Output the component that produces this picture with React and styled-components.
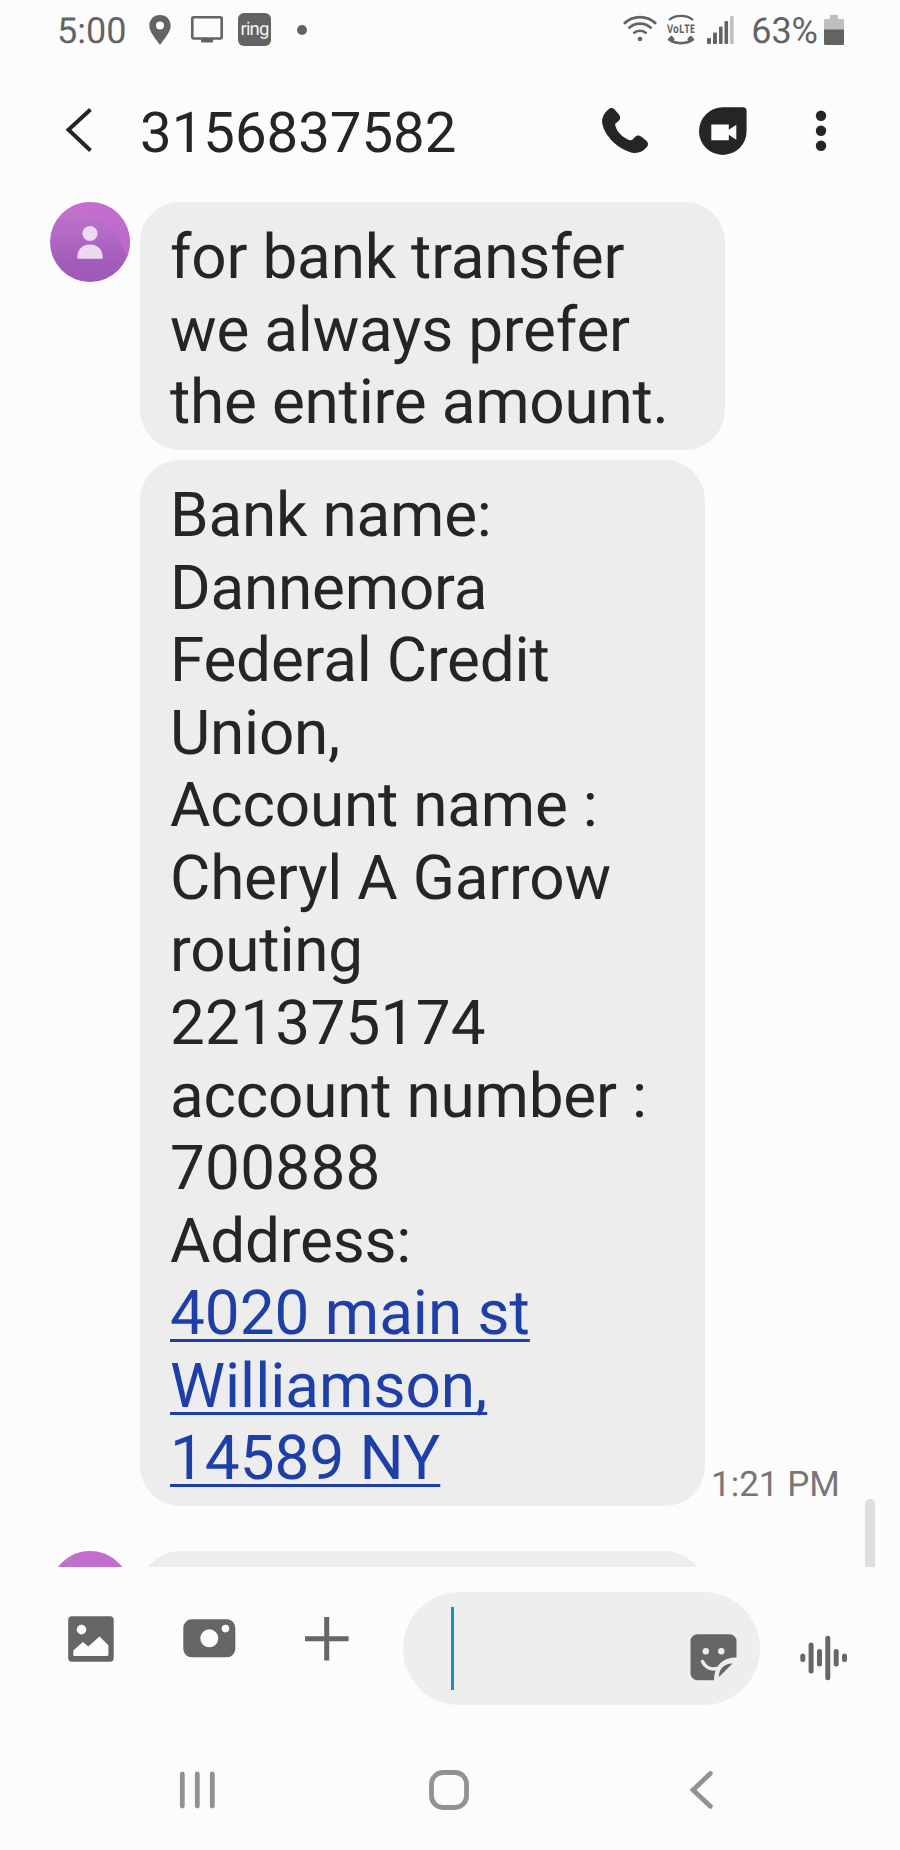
import styled, { createGlobalStyle } from 'styled-components';

const messages = [
  {
    id: 1,
    avatar: true,
    width: 585,
    lines: ['for bank transfer', 'we always prefer', 'the entire amount.'],
  },
  {
    id: 2,
    width: 565,
    lines: [
      'Bank name:',
      'Dannemora',
      'Federal Credit',
      'Union,',
      'Account name :',
      'Cheryl A Garrow',
      'routing',
      '221375174',
      'account number :',
      '700888',
      'Address:',
    ],
    link: ['4020 main st', 'Williamson,', '14589 NY'],
    time: '1:21 PM',
  },
  { id: 3, avatar: true, width: 565, lines: [] },
];

const isNumber = (line) => /^\d+$/.test(line);

const StatusIcons = () => (
  <>
    <Icon width="22" height="30" viewBox="0 0 22 30" $left={21}>
      <path
        fillRule="evenodd"
        d="M11 0C4.8 0 .3 4.8.3 10.6c0 6.400 5 11.400 10.700 19.400 5.700-8 10.700-13 10.700-19.400C21.700 4.800 17.200 0 11 0zm0 6.500a4 4 0 1 1 0 8 4 4 0 0 1 0-8z"
      />
    </Icon>
    <Icon width="32" height="27" viewBox="0 0 32 27" $left={20}>
      <rect
        x="1.300"
        y="1.300"
        width="29.400"
        height="21.200"
        rx="1.500"
        fill="none"
        stroke="currentColor"
        strokeWidth="2.600"
      />
      <rect x="10" y="22" width="12" height="4.500" rx="1" />
    </Icon>
    <RingBadge>ring</RingBadge>
    <Dot />
  </>
);

const SignalIcons = () => (
  <>
    <Icon width="34" height="27" viewBox="0 0 34 27" $top={-3}>
      <g fill="none" stroke="currentColor" strokeWidth="2.700">
        <path d="M1 8.800a22.500 22.500 0 0 1 32 0" />
        <path d="M5.500 13.400a16.200 16.200 0 0 1 23 0" />
        <path d="M10.500 18.400a9.300 9.300 0 0 1 13 0" />
      </g>
      <circle cx="17" cy="24" r="2.300" />
    </Icon>
    <Icon width="30" height="31" viewBox="0 0 30 31" $left={9}>
      <path
        d="M3 6C9 .5 21 .5 27 6"
        fill="none"
        stroke="currentColor"
        strokeWidth="2.200"
      />
      <text
        x="15"
        y="18.500"
        textAnchor="middle"
        textLength="28"
        lengthAdjust="spacingAndGlyphs"
        fontFamily="Open Sans, sans-serif"
        fontWeight="700"
        fontSize="12"
      >
        VoLTE
      </text>
      <path d="M1.500 25.500l3-3.300c.7-.6 1.500-.3 2.100.3l1.500 1.700c.6.7.5 1.400-.2 2.200 4 1.900 10.200 1.900 14.200 0-.7-.8-.8-1.500-.2-2.200l1.500-1.700c.6-.6 1.400-.9 2.100-.3l3 3.300C23 32 7 32 1.500 25.500z" />
    </Icon>
    <Icon width="28" height="28" viewBox="0 0 28 28" $left={11} $top={1}>
      <rect x="0" y="22" width="4" height="6" rx="1" />
      <rect x="6" y="16.500" width="4" height="11.500" rx="1" />
      <rect x="12" y="10.500" width="3.600" height="17.500" rx="1" />
      <rect x="17.500" y="5" width="3.600" height="23" rx="1" />
      <rect x="23" y="0" width="3.600" height="28" rx="1" opacity="0.4" />
    </Icon>
  </>
);

const App = () => {
  return (
    <>
      <GlobalStyle />
      <Screen>
        <StatusBar>
          <Clock>5:00</Clock>
          <StatusIcons />
          <Spacer />
          <SignalIcons />
          <Percent>63%</Percent>
          <Icon width="20" height="30" viewBox="0 0 20 30" $left={6}>
            <path
              d="M6 0h8v4h4.500c1 0 1.500.5 1.500 1.500V15H0V5.500C0 4.500.5 4 1.500 4H6z"
              opacity="0.4"
            />
            <path d="M0 14.500h20v14c0 1-.5 1.500-1.500 1.500h-17C.5 30 0 29.500 0 28.500z" />
          </Icon>
        </StatusBar>

        <Header>
          <Icon width="28" height="44" viewBox="0 0 28 44" $top={-2}>
            <path
              d="M25.500 1.500L3.500 21.800l22 20.700"
              fill="none"
              stroke="currentColor"
              strokeWidth="4"
            />
          </Icon>
          <Title>3156837582</Title>
          <Icon width="48" height="48" viewBox="0 0 48 48">
            <path d="M6.400 2.400C8.700.3 10.900.8 12.600 2.500l4.500 5.200c1.600 1.900 1.400 4.300-.3 6.100-2.500 2.400-4 2.200-3.500 4.700 1.300 6 7.500 12.400 14.700 14.800 2.500.2 3.200-1.200 4.900-3.200 1.700-1.700 4-2.200 6.200-.6l5 4c2.200 1.800 2.600 4.100.9 6.300C41.500 44.200 37.200 46.300 32 46 17 43.500 1.500 28.500.1 15 0 10 2.600 5.300 6.400 2.400z" />
          </Icon>
          <Icon width="48" height="48" viewBox="0 0 48 48" $left={49}>
            <path d="M24 .3h20c2.400 0 3.600 1.200 3.600 3.600V24A23.800 23.800 0 1 1 24 .3z" />
            <path fill="#fcfcfc" d="M12.300 17.500h17.500v5.300l7.500-5v15l-7.500-5v5.500H12.300z" />
          </Icon>
          <Icon width="12" height="42" viewBox="0 0 12 42" $left={68}>
            <circle cx="6" cy="5.800" r="5.200" />
            <circle cx="6" cy="20.800" r="5.200" />
            <circle cx="6" cy="35.800" r="5.200" />
          </Icon>
        </Header>

        <Thread>
          <Messages>
            {messages.map(({ id, avatar, width, lines, link, time }) => (
              <MessageRow key={id} $first={avatar}>
                <AvatarSlot>{avatar && <Avatar id={id} />}</AvatarSlot>
                <Bubble $width={width}>
                  {lines.map((line) => (
                    <Line key={line} $spacing={isNumber(line) ? 0.25 : -0.2}>
                      {line}
                    </Line>
                  ))}
                  {link &&
                    link.map((line) => (
                      <Line key={line}>
                        <AddressLink>{line}</AddressLink>
                      </Line>
                    ))}
                </Bubble>
                {time && <Time>{time}</Time>}
              </MessageRow>
            ))}
          </Messages>
          <Scrollbar />
        </Thread>

        <Composer>
          <Icon width="46" height="46" viewBox="0 0 46 46" $top={24.300}>
            <path
              fillRule="evenodd"
              d="M4 .2h38c2.500 0 3.700 1.200 3.700 3.800v38c0 2.500-1.200 3.700-3.700 3.700H4C1.500 45.700.2 44.500.2 42V4C.2 1.500 1.500.2 4 .2zM13.500 8.800a4.800 4.800 0 1 0 0 9.600 4.800 4.800 0 0 0 0-9.600zM5.300 34.500v4.200c0 .8.400 1.200 1.200 1.200h32.700c.8 0 1.200-.4 1.200-1.200v-9.500l-8.900-8.700-11.300 10-5.300-4.500z"
            />
          </Icon>
          <Icon width="53" height="39" viewBox="0 0 53 39" $left={69} $top={27}>
            <path
              fillRule="evenodd"
              d="M9 .3h35a8.500 8.500 0 0 1 8.300 8.500v21a8.500 8.500 0 0 1-8.300 8.500H9a8.500 8.500 0 0 1-8.700-8.500v-21A8.500 8.500 0 0 1 9 .3zM26.300 10.300a9 9 0 1 0 0 18 9 9 0 0 0 0-18zM42.500 5.800a3.800 3.800 0 1 0 0 7.600 3.800 3.800 0 0 0 0-7.600z"
            />
          </Icon>
          <Icon width="44" height="44" viewBox="0 0 44 44" $left={69} $top={25.800}>
            <path d="M19.200 0h5v19.200h19.400v5H24.200v19.200h-5V24.200H0v-5h19.200z" />
          </Icon>
          <Field>
            <Caret />
            <Icon width="47" height="47" viewBox="0 0 47 47" $top={18}>
              <path d="M7.500.3h32a7 7 0 0 1 7 7v16.200C34 23.500 24.500 30 24 46.200H7.500a7 7 0 0 1-7-7v-32a7 7 0 0 1 7-7z" />
              <path d="M42.500 29.500L29 43c-.5-7.500 5-13.500 13.500-13.500z" />
              <circle cx="15.800" cy="17.300" r="3.200" fill="#eee" />
              <circle cx="31.300" cy="17.300" r="3.200" fill="#eee" />
              <path
                d="M12.500 27.500c2.500 5.500 8 8.500 14.500 7"
                fill="none"
                stroke="#eee"
                strokeWidth="3.500"
                strokeLinecap="round"
              />
            </Icon>
          </Field>
          <Icon width="48" height="46" viewBox="0 0 48 46" $left={39.500} $top={43}>
            <g stroke="currentColor" strokeWidth="5" strokeLinecap="round">
              <path d="M2.800 21v3.500M11.100 10v26M19.500 16.500v12.500M27.800 3.300v39.500M36.200 16.500v12.500M44.500 21v3.500" />
            </g>
          </Icon>
        </Composer>

        <NavBar>
          <Icon width="36" height="40" viewBox="0 0 36 40">
            <path
              d="M3.300 4v32M18.300 4v32M33.300 4v32"
              stroke="currentColor"
              strokeWidth="4.800"
              strokeLinecap="round"
            />
          </Icon>
          <Icon width="40" height="40" viewBox="0 0 40 40" $left={214}>
            <rect
              x="2.500"
              y="2.500"
              width="35"
              height="35"
              rx="11.500"
              fill="none"
              stroke="currentColor"
              strokeWidth="4.800"
            />
          </Icon>
          <Icon width="24" height="40" viewBox="0 0 24 40" $left={221}>
            <path
              d="M20.300 3.500L3 20l17.300 16.300"
              fill="none"
              stroke="currentColor"
              strokeWidth="4.800"
              strokeLinecap="round"
            />
          </Icon>
        </NavBar>
      </Screen>
    </>
  );
};
export default App;

const Avatar = ({ id }) => (
  <Icon width="80" height="80" viewBox="0 0 80 80">
    <defs>
      <linearGradient id={`base${id}`} x1="0" y1="0" x2="0" y2="1">
        <stop offset="0" stopColor="#c478d0" />
        <stop offset="0.75" stopColor="#a25dba" />
        <stop offset="1" stopColor="#9f59ba" />
      </linearGradient>
      <clipPath id={`clip${id}`}>
        <circle cx="40" cy="40" r="40" />
      </clipPath>
    </defs>
    <g clipPath={`url(#clip${id})`}>
      <rect width="80" height="80" fill={`url(#base${id})`} />
      <path d="M20 8C50 12 70 28 77 56L84 50V-4H20z" fill="#c569cf" opacity="0.75" />
    </g>
    <circle cx="40" cy="31.500" r="7.600" fill="#ecdaf1" />
    <path
      d="M27.300 55.200c0-7.500 5-12.700 12.700-12.700s12.700 5.200 12.700 12.700c0 1-.4 1.500-1.400 1.500H28.700c-1 0-1.400-.5-1.400-1.500z"
      fill="#ecdaf1"
    />
  </Icon>
);

const GlobalStyle = createGlobalStyle`
  * {
    box-sizing: border-box;
  }
  body {
    margin: 0;
    background: #fcfcfc;
    font-family: Roboto, sans-serif;
    text-rendering: geometricPrecision;
  }
`;

const Icon = styled.svg`
  display: block;
  flex: none;
  overflow: visible;
  fill: currentColor;
  margin-left: ${({ $left = 0 }) => $left}px;
  margin-top: ${({ $top = 0 }) => $top}px;
`;

const Screen = styled.main`
  display: flex;
  flex-direction: column;
  width: 900px;
  height: 1850px;
  overflow: hidden;
  background: #fcfcfc;
`;

/* Status bar */

const StatusBar = styled.div`
  display: flex;
  align-items: center;
  height: 59px;
  padding: 0 56px 0 57px;
  color: #636363;
  font-size: 36px;
`;

const Clock = styled.span`
  width: 71px;
  line-height: 58px;
  padding-top: 3px;
`;

const RingBadge = styled.span`
  width: 33px;
  height: 33px;
  margin-left: 15px;
  border-radius: 6px;
  background: #636363;
  color: #f4f4f4;
  font-size: 18.500px;
  line-height: 32px;
  letter-spacing: -0.8px;
  text-align: center;
`;

const Dot = styled.span`
  width: 10px;
  height: 10px;
  margin-left: 26px;
  border-radius: 50%;
  background: #636363;
`;

const Spacer = styled.span`
  flex: 1;
`;

const Percent = styled.span`
  margin-left: 16px;
  padding-top: 3px;
  line-height: 58px;
`;

/* Header */

const Header = styled.header`
  display: flex;
  align-items: center;
  height: 143px;
  padding: 0 73px 0 65px;
  color: #252525;
`;

const Title = styled.h1`
  flex: 1;
  margin: 0 0 0 47px;
  padding-top: 5px;
  font-size: 56.300px;
  font-weight: 400;
`;

/* Messages */

const Thread = styled.section`
  position: relative;
  height: 1364.700px;
  overflow: hidden;
`;

const Messages = styled.div`
  display: flex;
  flex-direction: column;
`;

const MessageRow = styled.div`
  display: flex;
  margin-top: ${({ $first }) => ($first ? 45 : 10.300)}px;
  &:first-child {
    margin-top: 0.400px;
  }
`;

const AvatarSlot = styled.div`
  flex: none;
  width: 90px;
  margin-left: 50px;
`;

const Bubble = styled.div`
  flex: none;
  width: ${({ $width }) => $width}px;
  min-height: 120px;
  padding: 19.700px 20px 10.300px 30px;
  border-radius: 40px;
  background: #ededed;
  color: #252525;
  font-size: 62px;
`;

const Line = styled.p`
  margin: 0;
  line-height: 72.560px;
  letter-spacing: ${({ $spacing = 0 }) => $spacing}px;
  white-space: nowrap;
`;

const AddressLink = styled.a`
  color: #1f3fa8;
  text-decoration: underline;
  text-decoration-thickness: 3px;
  text-underline-offset: 5px;
  text-decoration-skip-ink: none;
`;

const Time = styled.span`
  align-self: flex-end;
  margin: 0 0 1px 6px;
  color: #777;
  font-size: 35px;
  line-height: 41px;
`;

const Scrollbar = styled.span`
  position: absolute;
  right: 25px;
  bottom: 0;
  width: 10px;
  height: 68px;
  border-radius: 5px 5px 1px 1px;
  background: #dedede;
`;

/* Composer */

const Composer = styled.footer`
  display: flex;
  align-items: flex-start;
  height: 157px;
  padding: 25px 50px 0 68px;
  color: #666;
`;

const Field = styled.div`
  display: flex;
  align-items: center;
  justify-content: space-between;
  width: 357px;
  height: 113.300px;
  margin-left: 54px;
  padding: 0 23px 0 47.500px;
  border-radius: 57px;
  background: #eee;
`;

const Caret = styled.span`
  width: 3.500px;
  height: 83px;
  background: #1791b8;
`;

/* System navigation */

const NavBar = styled.nav`
  display: flex;
  align-items: center;
  padding: 46px 0 0 179px;
  color: #929292;
`;
